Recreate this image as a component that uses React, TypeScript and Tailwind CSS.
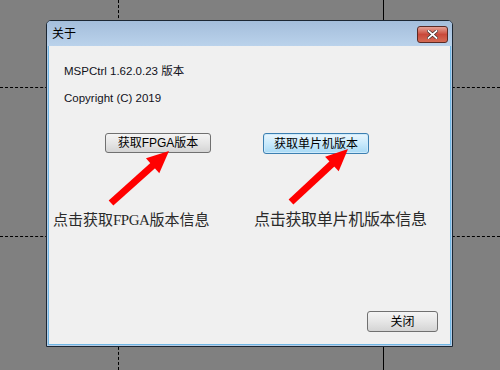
import React from "react";

const ui = { fontFamily: '"Liberation Sans", "Noto Sans CJK SC", sans-serif' };
const note = { fontFamily: '"Liberation Serif", "Noto Sans CJK SC", serif' };

function Arrow({ x1, y1, x2, y2 }: { x1: number; y1: number; x2: number; y2: number }) {
  const dx = x2 - x1;
  const dy = y2 - y1;
  const len = Math.hypot(dx, dy);
  const ux = dx / len;
  const uy = dy / len;
  const head = 22;
  const bx = x2 - ux * head;
  const by = y2 - uy * head;
  const px = -uy;
  const py = ux;
  const hw = 10;
  return (
    <g fill="#ff0000" stroke="none">
      <line x1={x1} y1={y1} x2={bx + ux * 2} y2={by + uy * 2} stroke="#ff0000" strokeWidth="7" />
      <polygon points={`${x2},${y2} ${bx + px * hw},${by + py * hw} ${bx - px * hw},${by - py * hw}`} />
    </g>
  );
}

export default function App() {
  return (
    <div className="relative h-[370px] w-[500px] overflow-hidden bg-[#808080]" style={ui}>
      {/* guide lines on the canvas behind the dialog */}
      <div className="absolute left-[118px] top-0 h-full border-l border-dashed border-black" />
      <div className="absolute left-[383px] top-0 h-full border-l border-black" />
      <div className="absolute left-0 top-[87px] w-full border-t border-dashed border-black" />
      <div className="absolute left-0 top-[236px] w-full border-t border-dashed border-black" />

      <div className="absolute left-[46px] top-[20px] flex h-[327px] w-[407px] flex-col rounded-t-[5px] border border-[#1c2733] bg-[#b4cce6]">
        <div className="flex h-[25px] items-center justify-between rounded-t-[4px] bg-gradient-to-b from-[#a4bedb] to-[#bad2eb] pl-[5px] pr-[4px]">
          <span className="text-[12px] text-black">关于</span>
          <div className="mt-[2px] flex h-[17px] w-[31px] items-center justify-center rounded-[3px] border border-[#5a2a24] bg-gradient-to-b from-[#e4a196] via-[#c9493a] to-[#d46b55]">
            <svg width="11" height="9" viewBox="0 0 11 9">
              <path d="M1.5 1 L9.5 8 M9.5 1 L1.5 8" stroke="#3b2a28" strokeWidth="3.2" strokeLinecap="square" />
              <path d="M1.5 1 L9.5 8 M9.5 1 L1.5 8" stroke="#ffffff" strokeWidth="1.8" strokeLinecap="square" />
            </svg>
          </div>
        </div>
        <div className="relative mx-[1px] mb-[1px] flex flex-1 flex-col border border-t-0 border-[#6fb6e4] bg-[#f0f0f0]">
          <div className="mt-[17px] pl-[15px] text-[11.5px] leading-[16px] text-[#10101a]">MSPCtrl 1.62.0.23 版本</div>
          <div className="mt-[11px] pl-[15px] text-[11.5px] leading-[16px] text-[#10101a]">Copyright (C) 2019</div>

          <div className="mt-[27px] flex pl-[56px]">
            <button className="flex h-[20px] w-[106px] items-center justify-center rounded-[3px] border border-[#707070] bg-gradient-to-b from-[#f4f4f4] via-[#e6e6e6] to-[#d4d4d4] text-[12px] text-black">
              获取FPGA版本
            </button>
            <button className="ml-[52px] flex h-[21px] w-[106px] items-center justify-center rounded-[3px] border border-[#3c7fb1] bg-gradient-to-b from-[#eaf6fd] via-[#c9eafc] to-[#a7d9f5] text-[12px] text-black shadow-[inset_0_0_0_1px_#cdeafb]">
              获取单片机版本
            </button>
          </div>

          <div className="mt-[56px] flex items-baseline pl-[4px] leading-[20px] text-[#2a2a2a]" style={note}>
            <span className="w-[201px] text-[15px]">
              点击获取<span className="tracking-[-0.5px]">FPGA</span>版本信息
            </span>
            <span className="text-[16px] tracking-[-0.3px]">点击获取单片机版本信息</span>
          </div>

          <div className="mt-auto mb-[12px] flex justify-end pr-[12px]">
            <button className="flex h-[21px] w-[71px] items-center justify-center rounded-[3px] border border-[#707070] bg-gradient-to-b from-[#f4f4f4] via-[#e6e6e6] to-[#d4d4d4] text-[12px] text-black">
              关闭
            </button>
          </div>

          <svg className="pointer-events-none absolute left-[-48px] top-[-45px]" width="500" height="370">
            <Arrow x1={110} y1={202} x2={168} y2={150} />
            <Arrow x1={290} y1={201} x2={347} y2={148} />
          </svg>
        </div>
      </div>
    </div>
  );
}
